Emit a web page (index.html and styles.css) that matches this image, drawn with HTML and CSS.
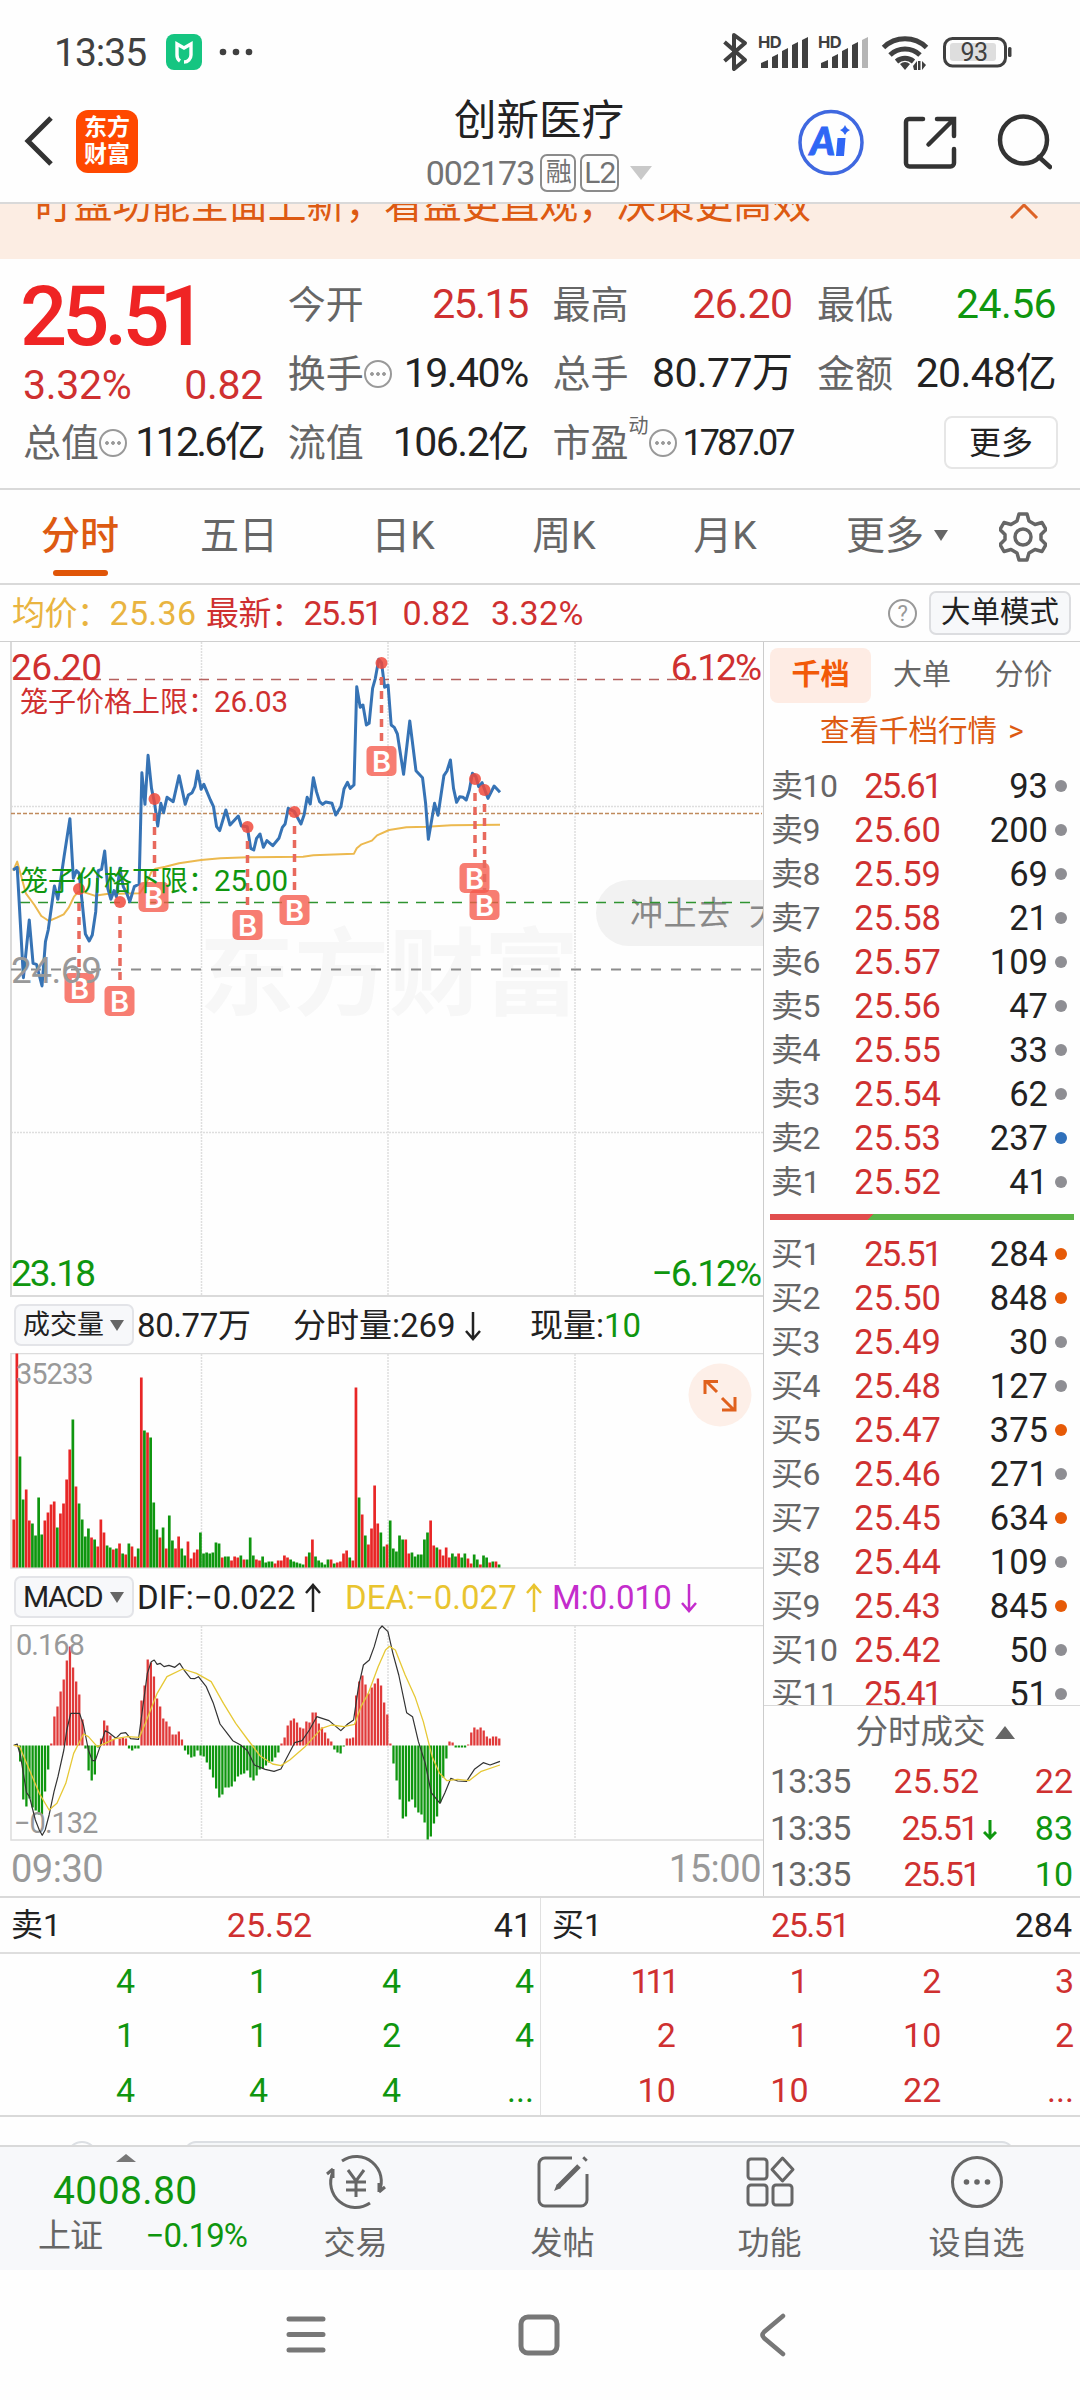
FILE: index.html
```html
<!DOCTYPE html>
<html lang="zh-CN">
<head>
    <meta charset="UTF-8">
    <meta name="viewport" content="width=device-width, initial-scale=1.0">
    <title>创新医疗 002173</title>
    <link rel="stylesheet" href="styles.css">
</head>
<body>
    <!-- Status bar -->
    <div class="status-bar">
        <span class="clock">13:35</span>
        <svg class="mi-icon" width="36" height="36" viewBox="0 0 36 36">
            <rect width="36" height="36" rx="8" fill="#15c581"/>
            <path d="M11 15V10l7 4 7-4v11a7 7 0 0 1-7 7" fill="none" stroke="#fff" stroke-width="3.400"/>
            <path d="M11 15v6a7 7 0 0 0 3 6" fill="none" stroke="#fff" stroke-width="3.400"/>
        </svg>
        <svg width="34" height="8" viewBox="0 0 34 8" fill="#404040"><circle cx="4" cy="4" r="3.300"/><circle cx="17" cy="4" r="3.300"/><circle cx="30" cy="4" r="3.300"/></svg>
        <svg class="status-icons" width="294" height="44" viewBox="720 30 294 44" fill="#404040">
            <path d="M724.500 42l20.500 18-11 9V35l11 8-20.500 18" fill="none" stroke="#404040" stroke-width="4" stroke-linejoin="round"/>
            <text x="758" y="48" class="hd">HD</text>
            <text x="818" y="48" class="hd">HD</text>
            <path d="M761 63l7-3v8h-7zM772 57l6-3v14h-6zM782 51l6-3v20h-6zM792 45l6-3v26h-6zM802 40l6-3v31h-6z"/>
            <path d="M821 63l7-3v8h-7zM832 57l6-3v14h-6zM842 51l6-3v20h-6zM852 45l6-3v26h-6z"/>
            <path d="M862 40l6-3v31h-6z" fill="#b5b5b5"/>
            <path d="M883.500 47.500a31 31 0 0 1 43 0M890 55a22 22 0 0 1 30 0M896.500 61.500a13 13 0 0 1 17 0" fill="none" stroke="#404040" stroke-width="5"/>
            <path d="M900 64q5-4 10 0l-5 6zM913 66l4-5v9h-3zM918 61h2.500v9H918zM922 61l4 4-4 5z"/>
            <rect x="944.500" y="38.500" width="61" height="27.500" rx="8" fill="none" stroke="#404040" stroke-width="3"/>
            <rect x="950" y="43" width="46" height="18" rx="3" fill="#dedede"/>
            <rect x="1008" y="47" width="3.500" height="10" rx="1.500"/>
            <text x="960.500" y="61" class="battery">93</text>
        </svg>
    </div>

    <!-- Title bar -->
    <div class="title-bar">
        <svg class="back" width="32" height="52" viewBox="0 0 32 52"><path d="M28 3L5 26l23 23" fill="none" stroke="#333" stroke-width="5"/></svg>
        <div class="logo">东方<br>财富</div>
        <div class="stock">
            <div class="stock-name">创新医疗</div>
            <div class="stock-code"><span>002173</span><i>融</i><i class="wide">L2</i><svg width="22" height="14" viewBox="0 0 22 14"><path d="M0 0h22L11 14z" fill="#c9c9c9"/></svg></div>
        </div>
        <svg class="title-icons" width="256" height="70" viewBox="796 106 256 70" fill="none" stroke="#333" stroke-width="4.500" stroke-linecap="round">
            <circle cx="831" cy="141.500" r="31" stroke="#3f68e0" stroke-width="3.500"/>
            <text x="810" y="154" class="ai">A</text>
            <path d="M845.500 137l-8 0-1.500 18h8z" fill="#2f66f5" stroke="none"/>
            <path d="M845 124q1.500 4 5 5-3.500 1.500-5 5-1.500-3.500-5-5 3.500-1 5-5z" fill="#2f66f5" stroke="none"/>
            <path d="M923 118h-14a3 3 0 0 0-3 3v41a3.500 3.500 0 0 0 3.500 3.500h41a3.500 3.500 0 0 0 3.500-3.500v-14M928.500 143.500l24-24M937 118h17v17"/>
            <circle cx="1023.500" cy="139" r="23.500"/><path d="M1039 156l11 10"/>
        </svg>
    </div>

    <div class="notice">
        <span>盯盘功能全面上新，看盘更直观，决策更高效</span>
        <svg width="30" height="16" viewBox="0 0 30 16"><path d="M2 15L15 2l13 13" fill="none" stroke="#dd6327" stroke-width="3"/></svg>
    </div>

    <!-- Quote -->
    <div class="quote">
        <div class="quote-col first">
            <div class="price">25.5<span>1</span></div>
            <div class="change up"><span>3.32%</span><span>0.82</span></div>
            <div class="cell"><label>总值<b class="more-dot"></b></label><span class="tight">112.6亿</span></div>
        </div>
        <div class="quote-col">
            <div class="cell"><label>今开</label><span class="up sq">25.15</span></div>
            <div class="cell"><label>换手<b class="more-dot"></b></label><span class="sq">19.40%</span></div>
            <div class="cell"><label>流值</label><span class="sq">106.2亿</span></div>
        </div>
        <div class="quote-col">
            <div class="cell"><label>最高</label><span class="up">26.20</span></div>
            <div class="cell"><label>总手</label><span>80.77万</span></div>
            <div class="cell"><label>市盈<sup>动</sup><b class="more-dot"></b></label><span class="small">1787.07</span></div>
        </div>
        <div class="quote-col">
            <div class="cell"><label>最低</label><span class="down">24.56</span></div>
            <div class="cell"><label>金额</label><span>20.48亿</span></div>
            <div class="cell"><button class="more-btn">更多</button></div>
        </div>
    </div>

    <!-- Period tabs -->
    <div class="tabs">
        <span class="active">分时</span>
        <span>五日</span>
        <span>日K</span>
        <span>周K</span>
        <span>月K</span>
        <span class="tab-more">更多<svg width="14" height="11" viewBox="0 0 14 11"><path d="M0 0h14L7 11z" fill="#666"/></svg></span>
        <svg class="gear" width="48" height="50" viewBox="0 0 48 50" fill="none" stroke="#666" stroke-width="3.500" stroke-linejoin="round">
            <path d="M20 2h8l2 7 6 3.500 7-2 4 7-5 5v5l5 5-4 7-7-2-6 3.500-2 7h-8l-2-7-6-3.500-7 2-4-7 5-5v-5l-5-5 4-7 7 2L18 9z"/>
            <circle cx="24" cy="25" r="8"/>
        </svg>
    </div>

    <div class="avg-row">
        <span class="avg">均价：<em>25.36</em></span>
        <span class="up latest">最新：<em class="sq">25.51</em><em>0.82</em><em>3.32%</em></span>
        <span class="help">?</span>
        <button>大单模式</button>
    </div>

    <div class="main">
        <div class="charts">
            <svg class="price-chart" width="763" height="655" viewBox="0 642 763 655">
                <text x="199" y="1008" class="watermark">东方财富</text>
                <g class="grid">
                    <path d="M201.500 642V1295M388 642V1295M575 642V1295M11 806.500H763M11 1132.500H763"/>
                </g>
                <path d="M763 880H629a33 33 0 0 0 0 66H763z" fill="#f2f2f2"/>
                <text x="630" y="925" class="bubble">冲上去</text>
                <text x="749" y="925" class="bubble">大</text>
                <path d="M11 642V1296H763" fill="none" stroke="#dadada" stroke-width="2"/>
                <path d="M55 679.500H750" stroke="#b5605e" stroke-width="1.500" stroke-dasharray="10 8"/>
                <path d="M11 813.500H762" stroke="#c08a5c" stroke-width="1.500" stroke-dasharray="4 2"/>
                <path d="M20 902.500H750" stroke="#2f9430" stroke-width="1.500" stroke-dasharray="10 8"/>
                <path d="M11 969.500H762" stroke="#8c8c8c" stroke-width="2" stroke-dasharray="10 10"/>
                <g transform="translate(0 630) scale(.34435 .33333)" fill="none" stroke-linejoin="round">
                    <polyline class="avg-line" points="38,722 50,695 62,740 75,790 100,825 120,858 142,873 165,863 185,853 200,832 215,800 228,785 245,787 275,797 310,792 405,790 425,760 440,725 452,716 480,710 520,700 584,690 640,685 720,682 880,680 910,676 1028,671 1036,655 1050,643 1080,632 1095,616 1130,600 1180,592 1240,590 1310,586 1452,584"/>
                    <polyline class="price-line" points="38,720 50,712 68,1043 85,870 96,1000 106,1003 122,1068 132,935 140,900 158,768 168,808 186,680 203,566 213,745 222,722 230,730 248,912 259,933 268,915 278,845 285,722 295,718 304,663 313,775 322,808 331,782 338,800 348,715 358,770 368,790 377,815 390,770 404,762 412,428 421,523 430,376 440,475 449,520 458,588 467,520 475,548 485,502 503,515 520,437 538,523 547,495 558,488 566,470 574,423 584,478 592,463 611,510 620,530 629,590 638,602 656,540 668,585 692,558 701,588 718,590 728,655 737,660 745,625 755,612 765,652 775,632 792,647 810,625 820,592 828,582 837,535 855,545 865,565 874,582 883,555 892,502 901,522 910,443 919,485 928,515 937,523 946,516 964,520 975,555 990,530 999,477 1009,457 1017,475 1028,465 1036,170 1046,232 1054,225 1064,285 1072,280 1082,175 1090,145 1100,88 1108,98 1117,172 1127,165 1136,285 1145,292 1154,312 1172,433 1190,273 1208,422 1227,443 1236,520 1244,628 1262,520 1272,556 1289,437 1298,423 1308,390 1317,475 1326,517 1335,500 1345,502 1354,510 1363,480 1372,430 1382,440 1390,470 1400,458 1417,505 1435,468 1452,487"/>
                </g>
                <g id="markers"></g>
                <g class="axis">
                    <text x="11" y="680" class="t-up">26.20</text>
                    <text x="760" y="680" class="t-up end">6.12%</text>
                    <text x="11" y="983" class="t-gray">24.69</text>
                    <text x="11" y="1286" class="t-down sq">23.18</text>
                    <text x="760" y="1286" class="t-down end">−6.12%</text>
                </g>
                <g class="limit">
                    <text x="20" y="712" class="t-up">笼子价格上限：</text><text x="214" y="712" class="t-up num">26.03</text>
                    <text x="20" y="891" class="t-down">笼子价格下限：</text><text x="214" y="891" class="t-down num">25.00</text>
                </g>
            </svg>

            <div class="ind-head">
                <button><span>成交量</span><i></i></button>
                <span class="v1">80.77万</span><span class="v2">分时量:269<svg class="arr" viewBox="0 0 16 30"><path d="M8 1v27M1 20l7 8 7-8"/></svg></span><span class="v3">现量:<em class="down">10</em></span>
            </div>
            <svg class="volume" width="763" height="216" viewBox="0 1353 763 216">
                <path class="grid" d="M201.500 1354V1567M388 1354V1567M575 1354V1567"/>
                <path d="M763 1353.500H11V1568H763" fill="none" stroke="#dcdcdc" stroke-width="1.500"/>
                <g id="volumeBars"></g>
                <text x="16" y="1384" class="scale">35233</text>
                <circle cx="720" cy="1395" r="31.500" fill="#fdefe8"/>
                <path d="M717 1392l-11-11M705 1394v-12.500h13M722 1398l12 12M735 1397v13h-13" fill="none" stroke="#e0611d" stroke-width="3"/>
            </svg>

            <div class="ind-head macd-head">
                <button><span>MACD</span><i></i></button>
                <span class="v1">DIF:−0.022<svg class="arr up-arr" viewBox="0 0 16 30"><path d="M8 1v27M1 20l7 8 7-8"/></svg></span><span class="dea">DEA:−0.027<svg class="arr up-arr" viewBox="0 0 16 30"><path d="M8 1v27M1 20l7 8 7-8"/></svg></span><span class="m">M:0.010<svg class="arr" viewBox="0 0 16 30"><path d="M8 1v27M1 20l7 8 7-8"/></svg></span>
            </div>
            <svg class="macd" width="763" height="216" viewBox="0 1625 763 216">
                <path class="grid" d="M201.500 1626V1839M388 1626V1839M575 1626V1839"/>
                <path d="M763 1625.500H11V1840H763" fill="none" stroke="#dcdcdc" stroke-width="1.500"/>
                <g id="macdBars"></g>
                <text x="16" y="1655" class="scale">0.168</text>
                <text x="14" y="1833" class="scale">−0.132</text>
                <g transform="translate(0 1570) scale(.4911 .33333)" fill="none" stroke-linejoin="round">
                    <polyline class="dif-line" points="28,526 35,522 42,560 54,668 60,680 72,750 80,780 86,796 92,780 100,735 110,665 118,620 130,540 136,480 144,430 162,430 170,465 180,540 188,572 194,572 206,520 214,482 222,488 236,505 246,490 256,488 266,506 282,508 290,420 300,310 308,275 314,270 320,283 326,280 334,290 344,286 356,292 366,280 376,303 388,325 396,326 404,320 420,350 434,398 448,462 460,485 474,512 490,525 504,542 518,585 540,598 558,604 572,597 585,560 600,518 615,512 630,480 645,440 670,452 694,482 708,462 720,450 730,350 740,285 752,270 762,230 772,178 778,168 790,185 800,250 812,315 828,428 840,440 852,515 866,580 878,668 896,700 906,668 918,625 932,633 950,634 966,598 984,578 998,585 1018,574"/>
                    <polyline class="dea-line" points="28,526 40,530 60,600 80,670 100,720 116,700 134,640 150,550 170,492 180,500 198,530 214,520 235,506 260,500 284,502 296,460 320,370 340,320 372,297 400,310 430,335 455,400 480,460 505,510 530,558 555,582 572,587 590,570 620,532 655,475 675,465 700,470 722,463 735,410 750,370 770,290 785,240 793,229 805,240 825,315 845,380 862,455 880,560 895,610 910,632 932,628 955,632 980,604 1018,585"/>
                </g>
            </svg>
            <div class="time-axis"><span>09:30</span><span>15:00</span></div>
        </div>

        <!-- Order book -->
        <div class="book">
            <div class="book-tabs"><span class="active">千档</span><span>大单</span><span>分价</span></div>
            <div class="book-link">查看千档行情 &gt;</div>
            <div class="levels" id="sells"></div>
            <div class="ratio"></div>
            <div class="levels buys" id="buys"></div>
            <div class="deals-head">分时成交<svg width="20" height="13" viewBox="0 0 20 13"><path d="M0 13h20L10 0z" fill="#666"/></svg></div>
            <div class="deals">
                <div><span>13:35</span><b class="up">25.52</b><em class="up">22</em></div>
                <div><span>13:35</span><b class="up tight">25.51<svg width="14" height="20" viewBox="0 0 14 20"><path d="M7 0v18M1 12l6 6 6-6" fill="none" stroke="#0f960f" stroke-width="3"/></svg></b><em class="down">83</em></div>
                <div><span>13:35</span><b class="up tight">25.51</b><em class="down">10</em></div>
            </div>
        </div>
    </div>

    <!-- Queue detail -->
    <div class="queue">
        <div class="queue-side">
            <div class="queue-head"><span>卖1</span><span class="up">25.52</span><span>41</span></div>
            <div class="queue-grid down">
                <span>4</span><span>1</span><span>4</span><span>4</span>
                <span>1</span><span>1</span><span>2</span><span>4</span>
                <span>4</span><span>4</span><span>4</span><span>...</span>
            </div>
        </div>
        <div class="queue-side">
            <div class="queue-head"><span>买1</span><span class="up sq">25.51</span><span>284</span></div>
            <div class="queue-grid up">
                <span class="ones">111</span><span>1</span><span>2</span><span>3</span>
                <span>2</span><span>1</span><span>10</span><span>2</span>
                <span>10</span><span>10</span><span>22</span><span>...</span>
            </div>
        </div>
    </div>

    <div class="peek"><i class="peek-dot"></i><i class="peek-box"></i></div>

    <!-- Bottom bar -->
    <div class="bottom-bar">
        <div class="index">
            <svg width="20" height="8" viewBox="0 0 20 8"><path d="M0 8h20L10 0z" fill="#777"/></svg>
            <div class="index-value down">4008.80</div>
            <div class="index-change"><span>上证</span><span class="down">−0.19%</span></div>
        </div>
        <div class="action">
            <svg width="62" height="56" viewBox="0 0 62 56" fill="none" stroke="#666" stroke-width="3">
                <path d="M17 7a25 25 0 0 1 37 31M54 38l6-5M54 38v-9M45 49A25 25 0 0 1 8 18M8 15l-6 5M8 15v9"/>
                <path d="M23 16l8 11 8-11M31 27v16M21 28h20M21 36h20"/>
            </svg>
            <span>交易</span>
        </div>
        <div class="action">
            <svg width="56" height="56" viewBox="0 0 56 56" fill="none" stroke="#666" stroke-width="3">
                <path d="M37 4H10a6 6 0 0 0-6 6v36a6 6 0 0 0 6 6h36a6 6 0 0 0 6-6V20"/>
                <path d="M44 12L23 33M49 6l2-2" stroke-width="5"/><path d="M19 37l3-7 4 4z" fill="#666" stroke="none"/>
            </svg>
            <span>发帖</span>
        </div>
        <div class="action">
            <svg width="56" height="56" viewBox="0 0 56 56" fill="none" stroke="#666" stroke-width="3" stroke-linejoin="round">
                <rect x="6" y="5" width="19" height="20" rx="3"/><rect x="6" y="31" width="19" height="20" rx="3"/><rect x="31" y="31" width="19" height="20" rx="3"/>
                <path d="M40.500 4L51 15.500 40.500 27 30 15.500z"/>
            </svg>
            <span>功能</span>
        </div>
        <div class="action">
            <svg width="56" height="56" viewBox="0 0 56 56"><circle cx="28" cy="28" r="24.500" fill="none" stroke="#666" stroke-width="3"/><g fill="#666"><circle cx="17.500" cy="28" r="2.800"/><circle cx="28" cy="28" r="2.800"/><circle cx="38.500" cy="28" r="2.800"/></g></svg>
            <span>设自选</span>
        </div>
    </div>

    <div class="system-nav">
        <svg width="40" height="44" viewBox="0 0 40 44"><path d="M3 6h34M3 21.500h34M3 37h34" stroke="#777" stroke-width="5" stroke-linecap="round"/></svg>
        <svg class="home" width="44" height="44" viewBox="0 0 44 44"><rect x="4" y="4" width="36" height="36" rx="7" fill="none" stroke="#777" stroke-width="5"/></svg>
        <svg width="30" height="44" viewBox="0 0 30 44"><path d="M26 3L7 19q-3 3 0 6l19 16" fill="none" stroke="#777" stroke-width="4.500" stroke-linecap="round"/></svg>
    </div>

    <script src="script.js"></script>
</body>
</html>
```
FILE: styles.css
```css
:root {
    --up: #cf3030;
    --down: #0f960f;
    --text: #222222;
    --gray: #666666;
    --orange: #dd5a12;
    --line: #d9d9d9;
}

* {
    box-sizing: border-box;
}

body {
    margin: 0;
    width: 1080px;
    height: 2400px;
    overflow: hidden;
    background-color: #fefefe;
    color: var(--text);
    font-family: Roboto, "Noto Sans CJK SC", sans-serif;
    font-size: 34px;
    line-height: 1;
}

button, label, em, i, b {
    font: inherit;
    color: inherit;
}

svg {
    flex: none;
}

.up { color: var(--up); }
.down { color: var(--down); }

/* Status bar */
.status-bar {
    height: 90px;
    padding: 14px 66px 0 54px;
    display: flex;
    align-items: center;
}

.clock {
    font-size: 39px;
    width: 112px;
    padding-top: 2px;
    letter-spacing: -1px;
    color: #404040;
}

.mi-icon {
    margin-right: 17px;
}

.status-icons {
    margin-left: auto;
}

.hd {
    font-family: Inter, sans-serif;
    font-size: 16.500px;
    font-weight: 700;
    letter-spacing: -0.500px;
}

.battery {
    font-size: 25px;
    letter-spacing: -0.500px;
}

/* Title bar */
.title-bar {
    height: 114px;
    padding: 0 28px 0 23px;
    display: flex;
    align-items: center;
    border-bottom: 2px solid var(--line);
}

.back {
    margin-top: -10px;
}

.logo {
    width: 62px;
    height: 63px;
    margin: -9px 0 0 21px;
    padding-top: 4px;
    border-radius: 12px;
    background-color: #ff4800;
    color: #fff;
    font-size: 23px;
    font-weight: 700;
    line-height: 27px;
    text-align: center;
}

.stock {
    flex: 1;
    margin-top: -6px;
    padding-left: 144px;
    text-align: center;
    color: var(--text);
}

.stock-name {
    font-size: 42.500px;
    line-height: 56px;
    margin-bottom: 4px;
}

.stock-code {
    display: flex;
    justify-content: center;
    align-items: center;
    height: 40px;
    gap: 4px;
    color: #737373;
    letter-spacing: -1px;
}

.stock-code i {
    width: 36px;
    height: 38px;
    margin-left: 2px;
    border: 2px solid #8b8b8b;
    border-radius: 7px;
    font-size: 26px;
    line-height: 33px;
}

.stock-code i.wide {
    width: 39px;
    margin: 0 7px 0 0;
    font-size: 30px;
}

.title-icons {
    margin-top: -9px;
}

.ai {
    font: italic 900 38px Lato, sans-serif;
    fill: #2f66f5;
    stroke: #2f66f5;
    stroke-width: 1;
}

.notice {
    height: 55px;
    padding: 0 41px 0 35px;
    display: flex;
    justify-content: space-between;
    overflow: hidden;
    background-color: #fcede3;
    color: var(--orange);
    font-size: 38.800px;
}

.notice svg {
    margin-top: -1px;
}

.notice span {
    margin-top: -18px;
    white-space: nowrap;
}

/* Quote */
.quote {
    height: 231px;
    padding: 11px 24px 0 23px;
    display: grid;
    grid-template-columns: 240px 240px 240px 239px;
    gap: 24.700px;
    border-bottom: 2px solid var(--line);
    font-size: 41px;
}

.cell {
    height: 69px;
    display: flex;
    align-items: center;
    justify-content: space-between;
    white-space: nowrap;
    letter-spacing: -0.600px;
}

.cell label {
    display: flex;
    align-items: center;
    font-size: 38px;
    letter-spacing: 0;
    color: var(--gray);
}

.cell .sq {
    letter-spacing: -1.500px;
}

.cell .tight {
    letter-spacing: -2.700px;
}

.cell .small {
    font-size: 36px;
    letter-spacing: -3px;
}

.cell sup {
    font-size: 20px;
    align-self: flex-start;
    margin: -8px 1px 0 0;
    line-height: 1;
}

.more-dot {
    width: 28px;
    height: 28px;
    border: 2px solid #999;
    border-radius: 50%;
    background: radial-gradient(circle, #999 1.500px, transparent 2.200px) center / 6px 6px no-repeat,
        radial-gradient(circle, #999 1.500px, transparent 2.200px) 3px center / 6px 6px no-repeat,
        radial-gradient(circle, #999 1.500px, transparent 2.200px) 15px center / 6px 6px no-repeat;
}

.price {
    height: 93px;
    margin-left: -3px;
    color: #ef2424;
    font-size: 83px;
    font-weight: 500;
    line-height: 93px;
    letter-spacing: -5px;
}

.price span {
    margin-left: -5px;
}

.change {
    height: 45px;
    display: flex;
    justify-content: space-between;
    align-items: center;
    letter-spacing: -0.300px;
}

.more-btn {
    width: 114px;
    height: 53px;
    margin: 0 -2px 0 auto;
    padding: 0;
    border: 2px solid #e6e6e6;
    border-radius: 8px;
    background: #fff;
    font-size: 32px;
    letter-spacing: 0;
}

/* Tabs */
.tabs {
    height: 95px;
    display: grid;
    grid-template-columns: 160px 158px 170px 152px 170px 174px 1fr;
    align-items: center;
    text-align: center;
    border-bottom: 2px solid var(--line);
    color: var(--gray);
    font-size: 39px;
}

.tabs .active {
    position: relative;
    color: var(--orange);
    font-weight: 500;
}

.tabs .active::after {
    content: "";
    position: absolute;
    left: 53px;
    top: 53px;
    width: 55px;
    height: 6px;
    border-radius: 3px;
    background-color: #e05508;
}

.tab-more svg {
    margin: 0 0 8px 10px;
}

.gear {
    margin-left: 15px;
}

.avg-row {
    height: 56px;
    padding: 0 9px 0 12px;
    display: flex;
    align-items: center;
    font-size: 33px;
    letter-spacing: -0.500px;
}

.avg-row em {
    font-size: 34px;
    letter-spacing: 0.300px;
}

.avg-row em.sq {
    letter-spacing: -1.500px;
}

.avg {
    width: 194px;
    color: #e9b440;
}

.latest em + em {
    margin-left: 21px;
}

.help {
    width: 29px;
    height: 29px;
    margin: 0 12px 0 auto;
    border: 2px solid #999;
    border-radius: 50%;
    color: #999;
    font-size: 22px;
    line-height: 26px;
    text-align: center;
}

.avg-row button {
    width: 142px;
    height: 44px;
    padding: 0;
    border: 2px solid #dcdde0;
    border-radius: 7px;
    background-color: #f7f8fa;
    font-size: 29.500px;
    letter-spacing: 0;
}

/* Charts */
.main {
    height: 1257px;
    display: flex;
    border-top: 1px solid #cfcfcf;
    border-bottom: 2px solid var(--line);
}

.charts {
    width: 764px;
    border-right: 1px solid #cccccc;
}

.charts > svg {
    display: block;
}

.grid {
    fill: none;
    stroke: #dedede;
    stroke-width: 1.500;
    stroke-dasharray: 2 1;
}

.watermark {
    font-size: 95px;
    font-weight: 700;
    fill: #f7f7f7;
}

.bubble {
    font-size: 33px;
    letter-spacing: 0.500px;
    fill: #888;
}

.price-line, .avg-line, .dif-line, .dea-line {
    vector-effect: non-scaling-stroke;
}

.price-line { stroke: #3673b5; stroke-width: 3; }
.avg-line { stroke: #ecb94f; stroke-width: 2; }
.dif-line { stroke: #333; stroke-width: 1.200; }
.dea-line { stroke: #e6c835; stroke-width: 1.300; }

.axis text {
    font-size: 37px;
    letter-spacing: -0.500px;
}

.axis .sq, .axis .end {
    letter-spacing: -2px;
}

.end { text-anchor: end; }
.t-up { fill: var(--up); }
.t-down { fill: var(--down); }
.t-gray { fill: #999; }

.limit text {
    font-size: 28px;
}

.limit .num {
    font-size: 29.500px;
}

.marker-box {
    fill: #f5584a;
    opacity: .78;
}

.marker-text {
    font-family: Inter, sans-serif;
    font-size: 29px;
    font-weight: 600;
    fill: #fff;
    text-anchor: middle;
}

.scale {
    font-size: 29px;
    letter-spacing: -1px;
    fill: #999;
}

.ind-head {
    height: 56px;
    padding-left: 14px;
    display: flex;
    align-items: center;
    white-space: nowrap;
    font-size: 33px;
}

.ind-head button {
    width: 120px;
    height: 42px;
    padding: 0 8px 0 7px;
    display: flex;
    justify-content: space-between;
    align-items: center;
    border: 2px solid #e3e4e8;
    border-radius: 7px;
    background-color: #f7f8fa;
    font-size: 27px;
}

.ind-head button i {
    border: 7px solid transparent;
    border-top: 11px solid #666;
    border-bottom: 0;
}

.v1 { width: 157px; padding-left: 3px; letter-spacing: -0.400px; }
.v2 { width: 239px; padding-left: 2px; }
.arr {
    width: 16px;
    height: 30px;
    margin-left: 9px;
    vertical-align: -4px;
    fill: none;
    stroke: currentColor;
    stroke-width: 2.500;
}
.up-arr { transform: scaleY(-1); }

.macd-head button { font-size: 30px; letter-spacing: -1.500px; }
.macd-head .v1 { width: 211px; letter-spacing: 0; }
.dea { width: 207px; color: #e9c42f; }
.m { color: #c42ccc; }

.time-axis {
    height: 56px;
    padding: 0 2px 0 11px;
    display: flex;
    justify-content: space-between;
    align-items: center;
    color: #999;
    font-size: 38px;
    letter-spacing: -0.500px;
}

/* Order book */
.book {
    flex: 1;
}

.book-tabs {
    height: 67px;
    padding: 6px 6px 0;
    display: flex;
    justify-content: space-between;
    color: var(--gray);
    font-size: 29px;
    line-height: 55px;
    text-align: center;
}

.book-tabs span {
    width: 101px;
    border-radius: 8px;
    height: 55px;
}

.book-tabs .active {
    background-color: #feece4;
    color: #f25a08;
    font-weight: 700;
}

.book-link {
    height: 55px;
    padding-left: 56px;
    color: var(--orange);
    font-size: 29.500px;
    line-height: 44px;
    white-space: pre;
    word-spacing: 4px;
}

.level {
    height: 44px;
    padding: 0 13px 0 7px;
    display: grid;
    grid-template-columns: 171px 106px 1fr;
    align-items: center;
    text-align: right;
}

.level span:first-child {
    color: var(--gray);
    font-size: 32px;
    letter-spacing: -0.500px;
}

.level div {
    display: flex;
    justify-content: space-between;
    align-items: center;
    margin-right: 1px;
}

.level > span {
    color: var(--text);
    font-size: 34.500px;
}

.level .up {
    color: var(--up);
    font-size: 34.500px;
}

.level .tight, .deals .tight {
    letter-spacing: -2px;
}

.level i {
    justify-self: end;
    width: 12px;
    height: 12px;
    border-radius: 50%;
    background-color: #8e8e93;
}

.level i.big { background-color: #e65a07; }
.level i.blue { background-color: #3070ba; }

.ratio {
    height: 6px;
    margin: 10px 6px 0 6px;
    background: linear-gradient(135deg, #e14d4d 73px, #5bb548 73.500px);
}

.buys {
    height: 486px;
    padding-top: 12px;
    overflow: hidden;
    border-bottom: 1.500px solid var(--line);
}

.deals-head {
    height: 52px;
    display: flex;
    align-items: center;
    justify-content: center;
    gap: 9px;
    padding-left: 26px;
    color: var(--gray);
    font-size: 32.500px;
}

.deals div {
    height: 46.500px;
    padding: 0 7px 0 6px;
    display: grid;
    grid-template-columns: 80px 129px 1fr;
    align-items: center;
    text-align: right;
    white-space: nowrap;
}

.deals span {
    color: var(--gray);
    text-align: left;
    letter-spacing: -0.800px;
}

.deals svg {
    margin: 0 -18px 0 6px;
}

/* Queue */
.queue {
    display: flex;
    height: 219px;
    border-bottom: 2px solid var(--line);
}

.queue-side {
    width: 540px;
}

.queue-side + .queue-side {
    border-left: 1.500px solid #e0e0e0;
}

.queue-head {
    height: 56px;
    padding: 0 8px 0 11px;
    display: grid;
    grid-template-columns: 150px 1fr 154px;
    align-items: center;
    text-align: center;
    border-bottom: 2px solid #dedede;
}

.queue-head span:first-child { text-align: left; font-size: 32px; }
.queue-head span:last-child { text-align: right; }
.queue-head .sq { letter-spacing: -1.500px; }

.queue-grid {
    padding: 0 6px 0 2px;
    display: grid;
    grid-template-columns: repeat(4, 1fr);
    grid-auto-rows: 54.300px;
    align-items: center;
    text-align: right;
}

.ones {
    letter-spacing: -4px;
}

.peek {
    height: 28px;
    overflow: hidden;
    display: flex;
    padding: 24px 0 0 66px;
}

.peek i {
    flex: none;
}

.peek-dot {
    width: 32px;
    height: 32px;
    border: 2px solid #dcdfe3;
    border-radius: 50%;
}

.peek-box {
    width: 830px;
    height: 60px;
    margin-left: 86px;
    border: 2px solid #dcdfe3;
    border-radius: 12px;
    background-color: #f5f7f9;
}

/* Bottom bar */
.bottom-bar {
    height: 125px;
    display: grid;
    grid-template-columns: 252px repeat(4, 207px);
    background-color: #f7f8fa;
    border-top: 2px solid var(--line);
    color: var(--gray);
}

.index {
    padding: 7px 0 0 38px;
}

.index > svg {
    display: block;
    margin-left: 78px;
}

.index-value {
    margin: 10px 0 0 15px;
    font-size: 39px;
    letter-spacing: 0.400px;
}

.index-change {
    display: flex;
    justify-content: space-between;
    align-items: center;
    margin-top: 8px;
    padding-right: 5px;
    font-size: 33px;
    letter-spacing: -1px;
}

.action {
    padding-top: 7px;
    display: flex;
    flex-direction: column;
    align-items: center;
    font-size: 32px;
}

.action span {
    margin-top: 17px;
}

.system-nav {
    height: 129px;
    padding: 0 293px 0 286px;
    display: flex;
    align-items: center;
    justify-content: space-between;
}

.home {
    margin-right: 5px;
}
```
FILE: script.js
```js
// Ten sell levels, then the buy levels: price, quantity, dot class
const sells = [
    ['卖10', '25.61', 93], ['卖9', '25.60', 200], ['卖8', '25.59', 69], ['卖7', '25.58', 21],
    ['卖6', '25.57', 109], ['卖5', '25.56', 47], ['卖4', '25.55', 33], ['卖3', '25.54', 62],
    ['卖2', '25.53', 237, 'blue'], ['卖1', '25.52', 41]
];
const buys = [
    ['买1', '25.51', 284, 'big'], ['买2', '25.50', 848, 'big'], ['买3', '25.49', 30], ['买4', '25.48', 127],
    ['买5', '25.47', 375, 'big'], ['买6', '25.46', 271], ['买7', '25.45', 634, 'big'], ['买8', '25.44', 109],
    ['买9', '25.43', 845, 'big'], ['买10', '25.42', 50], ['买11', '25.41', 51]
];

function renderLevels(id, rows) {
    document.getElementById(id).innerHTML = rows.map(([name, price, qty, dot = '']) => `
        <div class="level">
            <div><span>${name}</span><span class="up ${price.endsWith('1') ? 'tight' : ''}">${price}</span></div>
            <span>${qty}</span>
            <i class="${dot}"></i>
        </div>
    `).join('');
}

renderLevels('sells', sells);
renderLevels('buys', buys);

// Buy markers: dot x, dot y, box x, box top
const markers = [
    [79, 889, 79.5, 973], [120, 902, 119.5, 986], [154.5, 799, 153.5, 882], [247.5, 827, 247.5, 910],
    [294.5, 812, 294.5, 895], [381.5, 663, 381.5, 746], [475, 779, 474.5, 863], [484.5, 790, 484.5, 890]
];
document.getElementById('markers').innerHTML = markers.map(([x, y, bx, by]) => `
    <path d="M${x} ${y + 14}V${by}" stroke="#e8695d" stroke-width="3.5" stroke-dasharray="8 6"/>
    <circle cx="${x}" cy="${y}" r="6" fill="#f04a3c" opacity=".85"/>
    <rect class="marker-box" x="${bx - 15}" y="${by}" width="30" height="30" rx="5"/>
    <text class="marker-text" x="${bx}" y="${by + 25.5}">B</text>
`).join('');

// One entry per minute, r = rising, g = falling
const volume = 'r48 r214 g111 g68 r78 r47 g44 g32 g70 g33 r47 r55 r63 r66 g40 r54 r64 r88 r118 g148 r81 g64 g48 g31 g39 r30 g28 r21 r48 r35 g22 g20 r18 g19 r24 g14 r13 g24 r21 r11 g19 r190 g137 r135 g130 g65 g38 r30 g40 r19 g52 g27 r19 r31 g19 g12 r26 r9 r15 r18 g35 g14 g15 g14 g15 g25 g24 r10 g11 g11 r7 r11 r10 g12 r8 g8 g30 g12 r8 r7 g11 g5 g6 g6 r4 r7 r7 r12 r10 g8 g6 g5 g4 g3 r11 g15 r28 g11 g7 g5 g3 g8 r8 g4 r5 r6 r14 r17 g10 r7 r180 g70 r53 g32 r23 r39 r82 r44 g35 g21 r23 g47 g19 g16 g32 g28 r28 r14 g15 g11 g13 g13 g28 g35 r47 r22 g20 r18 r12 r20 r10 g14 g11 r14 g10 g14 r9 r4 g13 g8 r3 g12 g10 r5 g6 r6 g3'.split(' ');
const macd = [0, 0, -16, -54, -61, -53, -62, -65, -69, -69, -46, -24, 2, 29, 39, 54, 66, 85, 99, 78, 64, 51, 26, -3, -25, -35, -29, -2, 7, 25, 20, 10, 6, 0, 7, 8, 7, -3, -5, -3, -3, 45, 60, 86, 83, 69, 47, 39, 27, 24, 19, 11, 11, 14, 6, -5, -9, -12, -11, -5, -10, -11, -17, -24, -32, -43, -52, -49, -42, -42, -41, -36, -31, -29, -28, -25, -32, -35, -30, -24, -23, -20, -17, -16, -12, -7, 2, 8, 20, 25, 27, 23, 18, 17, 24, 23, 33, 33, 22, 18, 13, 7, 4, -4, -7, -8, -1, 7, 7, 8, 50, 64, 70, 61, 52, 58, 62, 67, 60, 43, 31, 2, -18, -35, -54, -73, -71, -56, -54, -62, -67, -69, -77, -94, -91, -78, -71, -57, -32, -13, 4, 3, -2, -2, -2, -2, 1, 13, 18, 16, 18, 15, 9, 7, 9, 9, 7];

const STEP = 3.111;

document.getElementById('volumeBars').innerHTML = volume.map((v, i) => {
    const h = +v.slice(1);
    return `<rect x="${12.4 + i * STEP}" y="${1567.5 - h}" width="2.7" height="${h}" fill="${v[0] === 'r' ? '#e82626' : '#0f960f'}"/>`;
}).join('');

document.getElementById('macdBars').innerHTML = macd.map((v, i) =>
    `<rect x="${12.8 + i * STEP}" y="${v > 0 ? 1745.5 - v : 1745.5}" width="2.3" height="${Math.abs(v)}" fill="${v > 0 ? '#e03a3a' : '#0f960f'}"/>`
).join('');
```
